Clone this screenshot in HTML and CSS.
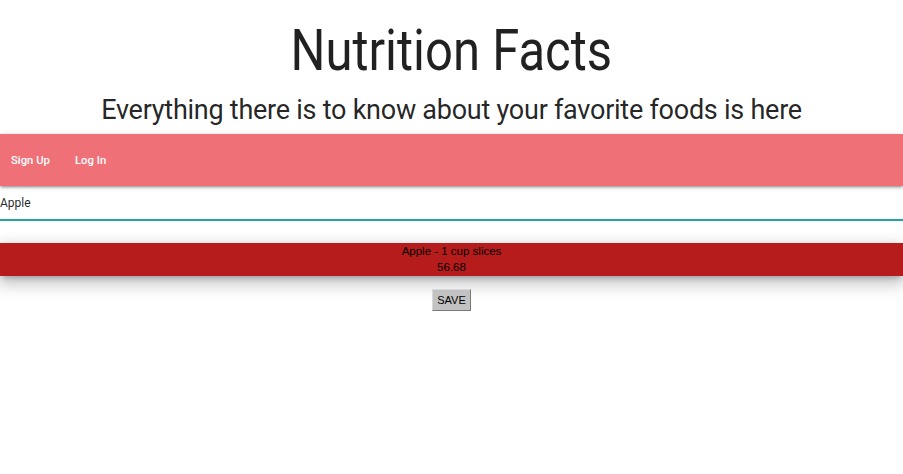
FILE: index.html
```html
<!DOCTYPE html>
<html>
<head>
<meta charset="utf-8">
<link rel="stylesheet" href="styles.css">
</head>
<body>
<header class="hero">
  <h1 class="title"><span class="title-text">Nutrition Facts</span></h1>
  <h2 class="subtitle">Everything there is to know about your favorite foods is here</h2>
</header>
<nav class="nav">
  <a class="nav-link" href="#">Sign Up</a>
  <a class="nav-link" href="#">Log In</a>
</nav>
<div class="search">
  <input class="search-input" type="text" value="Apple">
</div>
<div class="result">
  <div class="result-line">Apple - 1 cup slices</div>
  <div class="result-line">56.68</div>
</div>
<div class="actions">
  <button class="save-btn">SAVE</button>
</div>
</body>
</html>
```
FILE: styles.css
```css
* { box-sizing: border-box; }
html, body { margin: 0; padding: 0; background: #fff; }
body { font-family: Roboto, "Liberation Sans", sans-serif; color: rgba(0,0,0,0.87); }
.hero { text-align: center; padding-bottom: 6px; }
.title {
  margin: 0;
  padding-top: 15px;
  font-size: 58px;
  font-weight: 400;
  line-height: 70px;
}
.title-text {
  display: inline-block;
  transform: scaleX(0.845);
}
.subtitle {
  margin: 7px 0 0;
  font-size: 27px;
  font-weight: 400;
  line-height: 36px;
  letter-spacing: -0.25px;
}
.nav {
  height: 52px;
  background: #f07077;
  display: flex;
  align-items: center;
  padding-left: 11px;
  gap: 25px;
  box-shadow: 0 2px 2px 0 rgba(0,0,0,0.14), 0 3px 1px -2px rgba(0,0,0,0.12), 0 1px 5px 0 rgba(0,0,0,0.2);
  position: relative;
}
.nav-link {
  color: #fff;
  text-decoration: none;
  font-size: 11.3px;
  font-weight: 500;
}
.search-input {
  display: block;
  width: 100%;
  height: 35px;
  border: none;
  border-bottom: 2px solid #26a69a;
  outline: none;
  padding: 0;
  font-family: Roboto, sans-serif;
  font-size: 12px;
  color: rgba(0,0,0,0.87);
  background: transparent;
}
.result {
  margin-top: 22px;
  background: #b71c1c;
  height: 33px;
  padding-top: 1px;
  text-align: center;
  font-family: "Liberation Sans", Arial, sans-serif;
  font-size: 11.5px;
  line-height: 15.5px;
  color: #000;
  box-shadow: 0 8px 17px 2px rgba(0,0,0,0.14), 0 3px 14px 2px rgba(0,0,0,0.12), 0 5px 5px -3px rgba(0,0,0,0.2);
}
.actions { text-align: center; padding-top: 13px; }
.save-btn {
  font-family: "Liberation Sans", Arial, sans-serif;
  font-size: 11px;
  background: #c2c2c2;
  border: 1px solid #7a7a7a;
  border-top-color: #d8d8d8;
  border-left-color: #d8d8d8;
  padding: 0 4px;
  height: 22px;
  color: #000;
}
```
